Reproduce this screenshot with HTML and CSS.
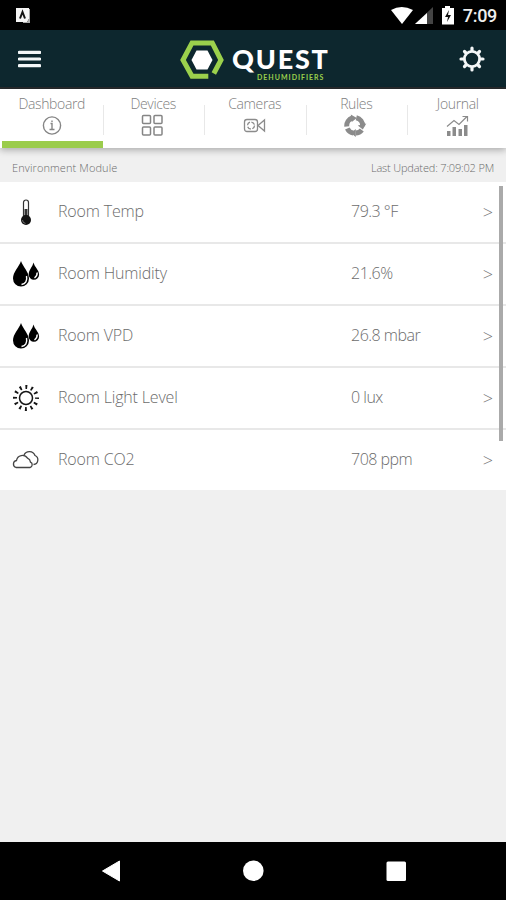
FILE: index.html
```html
<!DOCTYPE html>
<html lang="en">
<head>
<meta charset="utf-8">
<title>Quest Dehumidifiers</title>
<link rel="stylesheet" href="styles.css">
</head>
<body>
<svg class="defs" width="0" height="0">
  <symbol id="drops" viewBox="0 0 28 28">
    <path d="M9 1C7 7 1 12 1 18.500a8 8 0 0 0 16 0C17 12 11 7 9 1Z" fill="#000"/>
    <path d="M21.500 2.500C20.500 7 16.700 10 16.700 14.500a5.200 5.200 0 0 0 10.400 0C27.100 10 22.500 7 21.500 2.500Z" fill="#000"/>
    <path d="M14.500 16c1 5-1 8-5 8.500M25 12.500c.5 2-.5 4-2.500 5.500" fill="none" stroke="#fff" stroke-width="1.400"/>
  </symbol>
</svg>
<div class="status">
  <svg class="app-note" width="15" height="17" viewBox="0 0 15 17"><path d="M0 0h13v11l-2 3H0Z" fill="#f5f5f5"/><path d="M13 1h1v14H7v-1h4l2-3Z" fill="#aaa"/><path d="M4 10.500 6.500 4 9 10.500" fill="none" stroke="#111" stroke-width="2"/></svg>
  <svg class="signals" width="66" height="20" viewBox="0 0 66 20"><path d="M0 4Q10.500-2 22 4L11 18Z" fill="#fff"/><path d="M42 1v17H24Z" fill="#444"/><path d="M36 7v11H24Z" fill="#fff"/><path d="M51 2h3V0h5v2h4v16.500H51Z" fill="#fff"/><path d="m58 4-4 7h3l-1 5 4-7h-3Z" fill="#111"/></svg>
  <span class="clock">7:09</span>
</div>
<header class="bar">
  <svg class="menu" width="23" height="18" viewBox="0 0 23 18"><path d="M1.300 2.400h20.400M1.300 9h20.400M1.300 15.600h20.400" stroke="#f4f7f8" stroke-width="3.200" stroke-linecap="round"/></svg>
  <div class="brand">
    <svg width="44" height="40" viewBox="0 0 44 40"><path d="M28.300 36.300H12L3 20 12 2.900h20.300L41 20l-7.200 13.500" fill="none" stroke="#9bd04c" stroke-width="5"/><path d="M16.500 10.400h11l5 9.600-5 9.600h-11l-5-9.600Z" fill="#fff"/></svg>
    <div class="words"><span class="quest">QUEST</span><span class="sub">DEHUMIDIFIERS</span></div>
  </div>
  <svg class="gear" width="26" height="26" viewBox="0 0 26 26"><circle cx="13" cy="13" r="7.600" fill="none" stroke="#f4f7f8" stroke-width="2.800"/><g stroke="#f4f7f8" stroke-width="3.200" stroke-linecap="round"><path d="M13 4.500V2M13 21.500V24M4.500 13H2M21.500 13H24M7 7 5.500 5.500M19 7l1.500-1.500M7 19l-1.500 1.500M19 19l1.500 1.500"/></g></svg>
</header>
<nav class="tabs">
  <div class="tab active"><span>Dashboard</span><svg width="24" height="24" viewBox="0 0 24 24" fill="none" stroke="#858585" stroke-width="1.400"><circle cx="12" cy="11.500" r="8.600"/><path d="M12 6.500V8M10.500 9.500H12v6M9.500 15.500h5"/></svg></div>
  <div class="tab"><span>Devices</span><svg width="24" height="24" viewBox="0 0 24 24" fill="none" stroke="#858585" stroke-width="1.500"><rect x="1.500" y="1.500" width="8" height="8" rx="1"/><rect x="13" y="1.500" width="8" height="8" rx="1"/><rect x="1.500" y="13" width="8" height="8" rx="1"/><rect x="13" y="13" width="8" height="8" rx="1"/></svg></div>
  <div class="tab"><span>Cameras</span><svg width="24" height="24" viewBox="0 0 24 24" fill="none" stroke="#8b8b8b" stroke-width="1.300"><rect x="1.500" y="5.500" width="13" height="12" rx="2.500"/><circle cx="8" cy="11.500" r="3.500" stroke-dasharray="4 1.500"/><path d="M15 11.500 21.500 6v11Z"/></svg></div>
  <div class="tab"><span>Rules</span><svg width="24" height="24" viewBox="0 0 24 24"><g transform="translate(-1.200)"><g fill="none" stroke="#8b8b8b" stroke-width="5"><path d="M4 12.500A8 8 0 0 1 9.500 4"/><path d="M13.500 3.700A8 8 0 0 1 19.800 12"/><path d="M19 16A8 8 0 0 1 13 19"/><path d="M10.500 19A8 8 0 0 1 4.500 14.500"/></g><path d="m8 .500 6 3.500-5 4ZM23.500 9.500l-3.500 6-5-4ZM13 23v-8l-5 4Z" fill="#8b8b8b"/></g></svg></div>
  <div class="tab"><span>Journal</span><svg width="24" height="24" viewBox="0 0 24 24"><path d="M1 17h3.500v5H1ZM6.500 13H10v9H6.500ZM12.500 15H16v7h-3.500ZM18 11h3.500v11H18Z" fill="#8b8b8b"/><path d="m1 12.500 7-6 5 4 8-8M16.500 2.500h5v5" fill="none" stroke="#8b8b8b" stroke-width="1.200"/></svg></div>
</nav>
<main>
  <div class="module"><span class="mname">Environment Module</span><span class="updated">Last Updated: 7:09:02 PM</span></div>
  <div class="list">
    <div class="row"><svg class="ico" viewBox="0 0 28 28"><path d="M11.500 4.500a2.500 2.500 0 0 1 5 0V18h-5Z" fill="#fff" stroke="#333" stroke-width="1.200"/><path d="M12.500 11h3v10h-3Z" fill="#333"/><circle cx="14" cy="22" r="5" fill="#111"/><path d="M10.500 22a3.500 3.500 0 0 0 3 3.400" fill="none" stroke="#999" stroke-width=".7"/></svg><span class="name">Room Temp</span><span class="value">79.3 °F</span><span class="go">&gt;</span></div>
    <div class="row"><svg class="ico"><use href="#drops"/></svg><span class="name">Room Humidity</span><span class="value">21.6%</span><span class="go">&gt;</span></div>
    <div class="row"><svg class="ico"><use href="#drops"/></svg><span class="name">Room VPD</span><span class="value">26.8 mbar</span><span class="go">&gt;</span></div>
    <div class="row"><svg class="ico" viewBox="0 0 28 28" fill="none" stroke="#151515"><circle cx="14" cy="14" r="6.500" stroke-width="1.500"/><circle cx="14" cy="14" r="11" stroke-width="4" stroke-dasharray="1.900 3.860" stroke-dashoffset=".95"/></svg><span class="name">Room Light Level</span><span class="value">0 lux</span><span class="go">&gt;</span></div>
    <div class="row"><svg class="ico" viewBox="0 0 28 28" fill="none" stroke="#444" stroke-width="1.300"><path d="M4 21.500a3.600 3.600 0 0 1 .5-7 6 6 0 0 1 11-2.300 5 5 0 0 1 3 4 2.800 2.800 0 0 1-.5 5.300Z"/><path d="M12 9a6 6 0 0 1 11 .5 4.700 4.700 0 0 1-1.500 9"/></svg><span class="name">Room CO2</span><span class="value">708 ppm</span><span class="go">&gt;</span></div>
    <div class="thumb"></div>
  </div>
</main>
<footer class="navbar"><svg width="506" height="58" viewBox="0 0 506 58" fill="#fff"><path d="M102.500 29 119.500 19v20Z" stroke="#fff" stroke-linejoin="round"/><circle cx="253.300" cy="28.800" r="10.300"/><rect x="386.500" y="19.500" width="19.500" height="19.500" rx="1.500"/></svg></footer>
</body>
</html>
```
FILE: styles.css
```css
* { box-sizing: border-box; }
body { margin: 0; width: 506px; height: 900px; display: flex; flex-direction: column; background: #f0f0f0; font-family: "Open Sans", sans-serif; font-weight: 300; color: #6c6c6c; overflow: hidden; }
svg { display: block; flex: none; }
.defs { position: absolute; }
.status { height: 30px; background: #000; display: flex; align-items: center; padding: 2px 9px 0 16px; }
.signals { margin-left: auto; margin-right: 6px; }
.clock { font: 500 18px/28px Roboto, sans-serif; color: #eee; letter-spacing: -.3px; }
.bar { height: 59px; background: #0d272e; border-bottom: 2px solid #272b2d; display: grid; grid-template-columns: 180px 1fr auto; align-items: center; padding: 0 21px 0 0; }
.menu { margin-left: 18px; }
.brand { display: flex; align-items: center; }
.brand > svg { margin-top: 3px; }
.words { display: flex; flex-direction: column; margin-left: 8px; padding-top: 9px; }
.quest { font: 900 27px/25px Lato, sans-serif; color: #fff; letter-spacing: 1.8px; }
.sub { font: 700 7px/8px Lato, sans-serif; color: #9bd04c; letter-spacing: 1px; margin: 2px 0 0 25px; }
.gear { margin-top: 1px; }
.tabs { height: 59px; flex: none; background: #fff; display: grid; grid-template-columns: repeat(5, 101.5px); padding-left: 2px; box-shadow: 0 2px 7px rgba(0,0,0,.3); position: relative; }
.tab { display: flex; flex-direction: column; align-items: center; font-size: 14px; line-height: 20px; padding: 5px 2px 0 0; letter-spacing: -.35px; color: #808080; background: linear-gradient(#e8e8e8, #e8e8e8) right 16px / 1px 30px no-repeat; }
.tab:last-child { background: none; }
.active { background: linear-gradient(#9bcc4c, #9bcc4c) left bottom / 101px 7px no-repeat, linear-gradient(#e8e8e8, #e8e8e8) right 16px / 1px 30px no-repeat; }
main { flex: 1; }
.module { height: 34px; display: flex; justify-content: space-between; align-items: center; padding: 4px 12px 0; font-size: 11px; }
.mname { letter-spacing: .1px; }
.updated { letter-spacing: -.17px; }
.list { position: relative; background: #fff; }
.row { height: 62px; border-bottom: 2px solid #e8e8e8; display: grid; grid-template-columns: 46px 293px 1fr auto; align-items: center; padding: 0 13px 0 12px; font-size: 16px; }
.row:nth-child(5) { height: 60px; border: 0; }
.ico { width: 28px; height: 28px; }
.name { letter-spacing: -.17px; padding-bottom: 2px; }
.value { letter-spacing: -.5px; padding-bottom: 2px; }
.go { font-size: 18px; color: #777; }
.thumb { position: absolute; right: 3px; top: 4px; width: 4px; height: 255px; background: #aaa; }
.navbar { height: 58px; flex: none; background: #000; }
```
